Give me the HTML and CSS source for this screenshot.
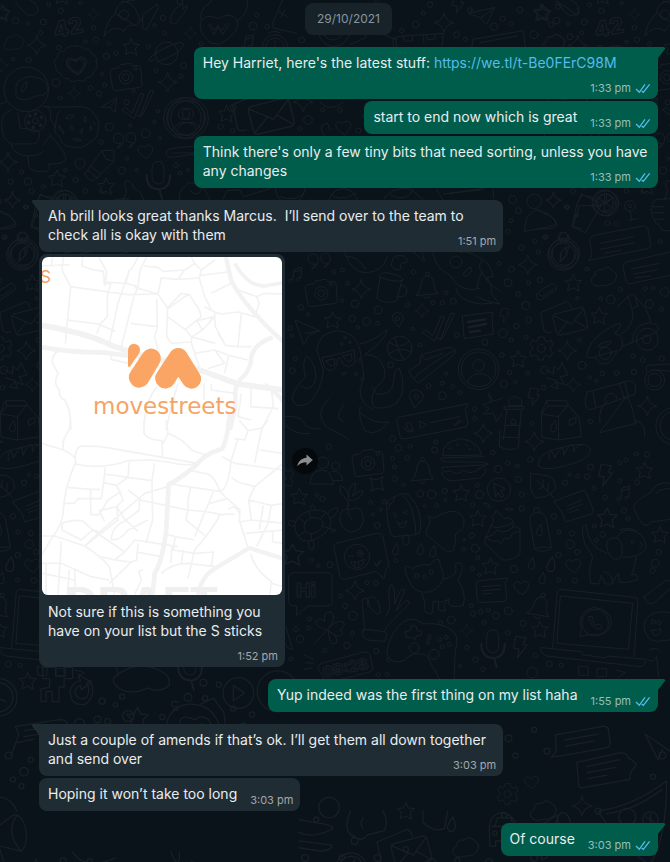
FILE: index.html
```html
<!DOCTYPE html>
<html lang="en">
<head>
  <meta charset="UTF-8" />
  <meta name="viewport" content="width=device-width, initial-scale=1.0" />
  <title>Chat</title>
  <link rel="stylesheet" href="styles.css">
</head>
<body>
  <svg class="wallpaper" aria-hidden="true">
    <defs>
      <path id="star" d="M0-25L7-9 25-7 12 5 16 24 0 15-17 22-13 4-25-8-8-9Z" />
      <path id="spark" d="M0-29Q4-5 29 0Q5 5 0 29Q-5 5-29 0Q-4-5 0-29Z" />
      <path id="heart" d="M4 22Q-24 6-23-8Q-18-24-1-11Q10-26 22-12Q26 2 4 22Z" />
      <path id="bolt" d="M-12-26L14-22 6-6 16-4-8 28-4 6-18 4Z" />
      <path id="drop" d="M4-18Q14 4 6 14Q-4 20-9 9Q-10 0 4-18Z" />
      <path id="cloud" d="M-30 24Q-48 8-28-4Q-26-26-6-22Q8-38 24-22Q44-10 34 8Q24 26-4 24Q-16 30-30 24Z" />
      <g id="camera">
        <path d="M-38-26L-22-29-17-38 14-42 20-34 36-36Q42-36 44-28L48 22Q48 28 42 30L-32 40Q-38 40-40 34L-48-14Q-49-24-38-26Z" />
        <circle r="20" /><circle r="10" /><circle cx="29" cy="-27" r="5" />
      </g>
      <g id="ticks">
        <path d="M-54 14L-44 6-24 24 2-36 12-32-18 40-54 14Z" />
        <path d="M-8 30L0 34 30-44 42-44 10 24Q2 40-8 30Z" />
      </g>
      <g id="user">
        <circle r="61" /><circle r="52" /><circle cy="-12" r="17" />
        <path d="M-34 38Q-22 12 4 13Q30 14 38 34" />
      </g>
      <g id="bell">
        <path d="M-32 28Q-18 16-16-10Q-12-32 4-30Q22-26 22-4Q24 14 34 22Z" />
        <circle cx="2" cy="-36" r="6" /><path d="M-8 32Q2 42 10 30" />
      </g>
      <g id="chat">
        <path d="M-44-26L46-38 44-22 48 28-38 42Z" />
        <path d="M-28-8L24-16M-26 8L26-2M-22 22L8 18" stroke-width="7" />
      </g>
      <g id="mic">
        <path d="M-18-22Q-18-46 0-46Q18-46 18-22V2Q18 22 2 22Q-16 22-18 2Z" />
        <path d="M-34-4Q-34 38 4 38Q36 36 36-4M4 38L12 66" stroke-width="6" />
      </g>
      <g id="envelope">
        <path d="M-42-22L34-42Q42-42 44-34L56 14Q56 22 48 24L-28 42Q-36 42-38 34L-50-12Q-50-20-42-22ZM-48-16L8 8 42-38M-34 38L-6 2M52 18L16-2" />
        <path d="M-54 32L-66 34Q-74 34-76 26L-86-26 -10-58Q0-60 6-40" />
      </g>
      <g id="planet">
        <circle r="34" /><path d="M-28 14Q-60 34-50 14Q-36-4 18-26Q60-42 48-20Q34 4-28 26" />
      </g>
      <g id="quote">
        <path d="M-12 8Q-34 12-34-8Q-32-24-16-22Q0-18-4 2Q-6 16-22 24ZM24 6Q4 8 4-12Q8-26 22-24Q36-18 32 0Q28 14 14 20Z" />
      </g>
      <path id="note" d="M-8 16Q-20 10-20 20Q-14 28-8 16L-4-16 20-22 16 10Q6 6 4 14Q10 24 16 10M-4-8L18-14" />
      <g id="gear">
        <path d="M-8-34H8L10-24 20-19 29-25 35-10 27-4V5L34 12 26 27 15 21 8 25 6 35H-8L-10 25-20 20-29 25-35 10-26 4V-5L-34-11-27-26-17-20-10-25Z" />
        <circle r="12" />
      </g>
    </defs>

    <g id="space" transform="scale(.3333)" data-dots="47,62,10 83,71,5 130,66,9 146,14,6 182,32,8 242,9,5 123,98,6 177,143,7 281,83,7 288,119,8 256,125,5 326,131,6 319,169,9 348,159,7 86,180,8 39,177,5 168,248,12 271,264,7 297,281,8 181,294,6 314,255,6 306,222,5 467,212,6 551,197,9 543,229,6 401,272,5 446,140,6 489,54,8 463,76,5 494,99,6 328,381,12 380,307,8 391,376,5 437,400,13 474,333,5 463,366,5 303,426,7 240,490,15 366,512,11 381,476,5 411,511,5 32,545,8 84,545,11 65,517,6 130,560,6 227,540,8 256,573,7 196,510,5 79,621,6 528,496,7 540,519,6 564,510,5 15,711,6 108,646,5 479,414,5 540,4,9">
      <path d="M74-6Q116 6 114 34Q96 60 70 34L46 6M10 20L26 34 16 56 0 50" />
      <text x="0" y="0" transform="translate(166 114) rotate(-12)" font-size="66">42</text>
      <path d="M312 108Q318 66 346 40Q350 10 376 4Q412 16 420 64L410 76Q378 70 372 94Q340 70 312 108ZM346 40L404 76M364 6Q430 0 462-20M420 64L432 50M428 84V44L472 12 476 22 440 88Z" />
      <circle cx="372" cy="44" r="14" />
      <path d="M512 68Q506 44 540 14Q554 10 548 28L562 16Q562 32 540 54Q526 82 512 68Z" />
      <use href="#spark" transform="translate(281 44) scale(.6)" /><use href="#spark" x="110" y="136" /><use href="#spark" transform="translate(571 100) scale(.65)" />
      <use href="#spark" transform="translate(223 280) scale(.65)" /><use href="#spark" x="503" y="247" /><use href="#spark" x="24" y="486" /><use href="#spark" transform="translate(38 602) scale(.8)" /><use href="#spark" transform="translate(4 196) scale(.7)" />
      <use href="#star" x="394" y="141" /><use href="#star" x="171" y="536" /><use href="#star" x="318" y="559" /><use href="#star" x="6" y="40" transform="rotate(0)" /><use href="#star" x="186" y="-12" />
      <use href="#cloud" transform="translate(42 128) scale(.8)" />
      <path d="M228 138Q244 134 252 148Q272 144 276 162Q294 168 288 186Q298 204 282 212Q280 232 262 232Q250 250 234 240Q216 252 204 236Q186 238 182 220Q164 214 168 198Q156 182 172 172Q172 154 192 154Q204 134 228 138Z" />
      <use href="#heart" x="229" y="197" /><use href="#heart" transform="translate(229 196) scale(1.3)" />
      <use href="#camera" x="378" y="232" /><use href="#planet" x="500" y="160" /><use href="#ticks" x="420" y="316" /><use href="#user" x="552" y="354" />
      <path d="M304 322L350 292 346 338 330 322ZM330 322L346 300" />
      <circle cx="79" cy="268" r="67" />
      <path d="M48 280Q40 236 88 230Q136 230 144 264Q144 288 110 288Q70 306 52 294Q46 290 48 280ZM64 270Q68 244 82 248Q80 268 68 276ZM0 312L18 306M140 318Q156 330 152 356L168 384M34 330Q0 340 6 380Q6 420 34 432H100Q116 430 118 408Q120 392 106 390L60 384 54 340M34 432Q36 464 84 468L86 496Q90 518 140 514Q154 508 146 492Q200 494 198 470Q184 440 150 406M84 468Q120 468 128 454M152 404L130 434" />
      <circle cx="106" cy="363" r="32" /><circle cx="106" cy="363" r="9" />
      <g stroke-width="5"><circle cx="106" cy="342" r="3" /><circle cx="124" cy="352" r="3" /><circle cx="122" cy="376" r="3" /><circle cx="100" cy="382" r="3" /><circle cx="86" cy="368" r="3" /><circle cx="90" cy="348" r="3" /></g>
      <path d="M130 320Q190 322 230 320Q270 318 282 342Q304 366 294 392Q294 418 268 428Q244 450 212 440Q184 438 178 410Q156 394 168 370Q168 346 180 332" />
      <path d="M198 356Q206 340 222 346Q216 358 198 356ZM256 350Q262 358 256 366Q246 362 256 350ZM212 378Q222 380 218 390Q208 388 212 378ZM246 386Q252 394 244 402Q236 396 246 386ZM272 392Q280 384 272 376ZM176 376Q190 390 192 402Q178 394 176 376ZM220 418Q236 410 244 422Q230 426 220 418ZM280 366L286 374" />
      <use href="#quote" x="374" y="422" /><use href="#heart" x="436" y="454" /><use href="#mic" x="474" y="530" />
      <path d="M254 522L306 452 342 450 342 484 284 540Q268 548 254 522ZM306 452L318 478 342 484M262 510L292 534M272 498L302 522" />
      <path d="M600 436L510 446Q496 452 498 464Q504 474 520 472L600 460M514 459H590" />
      <path d="M370 600L380 574Q366 540 384 542Q396 546 402 566Q424 572 430 600M540 600Q532 572 556 560Q560 544 580 550L600 548M114 600L122 586 156 592" />
      <circle cx="196" cy="610" r="38" /><circle cx="196" cy="610" r="28" /><path d="M196 582V610L174 592M196 610L218 592" />
      <path d="M-10 630Q36 640 48 676Q40 690-10 686M114 620L96 680 120 686" />
      <circle cx="70" cy="760" r="46" /><circle cx="70" cy="760" r="36" /><circle cx="70" cy="712" r="14" /><path d="M84 738L76 768 58 784 62 754Z" />
    </g>
    <use href="#space" x="541" />

    <g transform="translate(190) scale(.3333)" data-dots="200,45,6 189,78,12 232,80,7 33,131,6 335,120,9 635,92,7 677,74,10 700,40,6 800,104,9 826,118,6 912,80,11 938,56,8 962,72,6 990,30,9 1032,104,12 1084,74,8 840,30,7 1104,20,8 1140,110,9 130,322,9 92,380,8 128,392,7 354,360,13 398,330,6 450,330,7 330,386,6 505,392,8 524,350,6 560,10,7 720,14,8">
      <path d="M60 128Q20 92 34 62Q48 40 86 56Q120 32 142 62Q152 96 92 132ZM34 62Q24 30 60 8L70-10M142 62Q180 40 172-10M54 72L72 104 84 82 98 104 118 70M60 72L74 92 84 74 96 92 108 70" />
      <path d="M250 84Q244 70 256 52L280-6M250 84L320 100M264 34L292 50M284 30L272 54" />
      <circle cx="255" cy="142" r="38" /><circle cx="255" cy="142" r="28" /><path d="M255 120V146H238M234 100Q250 90 270 98" />
      <use href="#note" x="171" y="126" /><circle cx="432" cy="94" r="46" /><path d="M400 104Q432 140 460 100ZM480 134L530 112 512 80 560 96 620 120" />
      <path d="M620 140L616 112 640 108 700 104 702 130M700 104L760 100 756 138M640 108L644 124 668 122 666 106M710 104L712 120 736 116 734 102M610 112Q600 150 640 160" />
      <use href="#spark" x="762" y="68" /><use href="#bolt" x="806" y="12" /><use href="#star" x="1054" y="38" /><use href="#cloud" transform="translate(1090 130) scale(.9)" />
      <path d="M836 40L914 22 890 74 872 54ZM914 22L872 54M1100 4Q1130 20 1160 46Q1174 40 1160 26M845 140L850 118 1000 92 1006 140M870 128L982 108" />
      <use href="#user" x="-6" y="354" /><use href="#star" x="110" y="342" /><use href="#envelope" transform="translate(240 348) scale(1.3)" /><use href="#spark" x="340" y="306" /><use href="#heart" x="460" y="382" />
      <path d="M396 376Q388 400 418 420L438 408M396 376L412 368 420 390M390 306Q420 340 460 306" />
      <circle cx="300" cy="566" r="44" /><circle cx="460" cy="610" r="44" /><path d="M100 596L110 572 150 570 160 590 240 566M580 600Q600 560 660 566L700 600M740 570L760 600M780 580L880 566M0 570Q20 600 40 560L60 600" />
    </g>

    <g id="street" transform="translate(280 190) scale(.3333)" data-dots="698,28,12 715,62,9 693,92,6 684,125,7 859,51,6 764,154,6 725,173,8 775,187,6 795,142,6 695,238,9 658,220,6 684,278,12 714,312,7 746,278,6 780,270,8 878,4,8 921,237,6 892,325,5 963,326,5 992,329,13 1022,298,6 1096,296,6 1120,294,5 1154,306,13 1108,342,12 1145,358,6 737,347,12 746,390,9 709,408,8 669,430,13 694,450,6 739,442,6 898,451,6 1059,498,6 1088,510,7 1145,506,8 906,526,12 967,551,7 1010,549,7 1062,546,8 949,573,5 929,562,5 794,540,12 743,549,6 689,548,7 666,495,7 615,457,9 671,582,11 706,576,5 791,593,7 531,435,7 399,417,5 420,465,6 383,345,6 401,246,7 459,338,6 487,338,6 520,334,9 498,309,6 162,246,6 187,240,6 203,280,6 225,341,11 186,332,5 63,352,8 84,373,5 217,386,10 260,394,12 293,400,6 234,412,5 295,360,12 30,415,7 35,438,5 46,506,6 37,542,9 332,525,9 499,551,5 487,580,6 446,588,7 487,617,12 518,590,6 540,608,6 240,511,5 228,552,5 247,566,5 584,657,6 584,685,6 757,701,6 931,694,7 983,100,8 1009,102,7 1141,155,6">
      <use href="#quote" x="118" y="214" /><use href="#note" x="46" y="254" /><use href="#camera" x="124" y="310" /><use href="#bell" x="440" y="288" />
      <use href="#ticks" x="482" y="414" /><use href="#chat" x="592" y="404" /><use href="#user" x="596" y="538" /><use href="#gear" x="784" y="475" /><use href="#envelope" x="868" y="394" /><use href="#cloud" x="972" y="262" />
      <use href="#star" x="158" y="391" /><use href="#star" x="880" y="279" /><use href="#star" x="958" y="378" /><use href="#star" x="715" y="508" />
      <use href="#spark" x="244" y="298" /><use href="#spark" x="743" y="224" /><use href="#spark" x="862" y="482" /><use href="#spark" x="1102" y="648" /><use href="#spark" transform="translate(426 362) scale(.75)" /><use href="#spark" transform="translate(820 30) scale(.85)" /><use href="#spark" transform="translate(880 584) scale(.75)" />
      <use href="#bolt" transform="translate(676 375) scale(.8)" /><use href="#bolt" x="764" y="620" />
      <circle cx="763" cy="34" r="22" /><path d="M734 124Q732 80 762 62Q772 56 790 70Q824 78 830 102Q810 112 734 124Z" />
      <path d="M904 12L890 46 876 110 916 128 966 42 904 12M892 48L962 46" /><circle cx="974" cy="38" r="38" /><circle cx="974" cy="38" r="26" /><path d="M974 12V64M950 24L998 54M950 54L998 24" />
      <circle cx="1050" cy="48" r="16" /><circle cx="1050" cy="48" r="5" /><path d="M1050 64L1056 88M1046 92L1070 86" />
      <path d="M1170 26L1130 28Q1114 36 1118 52Q1108 60 1118 68Q1110 80 1124 88Q1120 98 1136 104L1148 122H1170M1118 50H1150M1118 68H1152M1122 88H1152" />
      <circle cx="849" cy="195" r="46" /><circle cx="849" cy="195" r="36" /><circle cx="849" cy="140" r="14" /><path d="M858 172L858 194 840 216 842 190Z" />
      <path d="M942 136L1090 108Q1102 108 1104 116L1112 164Q1112 174 1102 176L952 206 926 212 936 196 930 152Q930 140 942 136ZM962 160L1060 140M962 178L1062 158M974 190L1024 180M1170 186L1040 216Q1028 220 1030 232L1038 274Q1044 284 1056 280L1170 256M1056 236L1140 220M1062 252L1130 240M1064 264L1110 258" />
      <path d="M300 262L290 324Q318 346 350 332L366 270M300 262Q296 248 320 248Q364 256 370 270Q350 280 300 262ZM362 286Q384 286 380 306Q376 326 352 318" />
      <path d="M194 186Q214 250 260 248Q310 244 322 200M198 200Q230 194 258 238M340 204Q366 186 380 208Q386 220 370 218Q356 220 364 236Q344 246 334 226ZM400 186L434 216 426 186M458 186Q470 240 510 256Q540 310 600 296Q580 300 606 246Q590 230 608 210Q560 176 540 188M606 246Q620 280 658 302M610 210Q630 220 640 260L620 262Q640 290 634 310L658 342Q620 336 590 320M528 296Q530 330 600 342L636 340" />
      <circle cx="528" cy="216" r="18" /><rect x="548" y="240" width="30" height="12" rx="5" transform="rotate(-45 563 246)" />
      <path d="M46 390L118 422 88 434 72 464ZM118 422L74 430" /><path d="M356 410L336 386Q338 366 354 368Q372 372 370 388Z" /><circle cx="352" cy="386" r="6" />
      <circle cx="359" cy="475" r="37" /><path d="M328 458Q360 480 388 454M326 492Q360 466 394 486M344 442Q352 480 370 508" />
      <path d="M110 480Q114 430 170 422Q226 424 240 480L252 560 240 600Q240 640 280 660M110 480L130 540Q126 600 86 640Q44 660 36 624Q46 590 76 560Q64 510 82 498Q106 520 108 560Q100 610 62 590M240 462Q290 450 320 418Q326 430 286 470L254 494Q300 490 314 540Q320 570 290 590Q268 620 280 650Q310 662 350 640Q384 600 358 534Q340 540 342 570Q336 620 290 612L276 590M146 626Q100 670 140 712Q200 740 206 750M190 644Q160 690 190 694M240 650Q234 690 256 724Q290 740 326 696Q280 704 240 668M16 680Q60 676 70 696Q80 720 120 716M10 700Q50 740 90 730" />
      <path d="M126 504L222 480 226 516Q210 540 188 522L180 502 172 508Q174 540 150 542Q130 536 126 504ZM138 512L164 506 164 526Q148 534 138 512ZM188 498L214 492 216 510Q202 524 188 498Z" />
      <circle cx="195" cy="442" r="4" /><circle cx="185" cy="461" r="4" /><circle cx="210" cy="457" r="4" /><path d="M186 554Q190 544 200 546Q196 560 186 554Z" />
      <path d="M386 544Q392 560 414 580Q480 530 526 490Q528 474 506 472L424 494 420 520ZM400 566Q450 520 526 480M424 494L436 510 490 490" />
      <path d="M770 310Q764 330 784 330L828 300Q834 284 816 280L778 304Q774 320 790 318L818 298" />
      <path d="M1012 350L1050 314 1064 314 1074 348 1056 356 1044 320M1064 320Q1104 350 1112 398M1056 356Q1070 400 1024 434M920 500Q924 440 1020 398Q1026 410 1004 430Q1040 440 1022 480L960 496Q932 510 920 500ZM1026 470L1056 458M1056 458Q1060 400 1110 398Q1150 406 1126 430Q1090 440 1056 458M944 502Q980 550 1010 486" />
      <circle cx="1102" cy="448" r="33" /><circle cx="1100" cy="448" r="13" /><circle cx="976" cy="490" r="18" /><ellipse cx="974" cy="463" rx="20" ry="6" transform="rotate(-20 974 463)" />
      <path d="M798 540L820 552 822 528 836 540 846 518 864 556 840 560 854 584 828 576 836 596 812 590 830 572 800 564" />
      <path d="M404 654L388 620Q390 598 410 600Q432 606 430 622Z" /><circle cx="409" cy="620" r="7" />
      <path d="M356 682L540 646 564 640 556 660 564 700Q564 710 552 712L376 746 362 746 350 694Q350 684 356 682ZM420 694L440 704 422 716ZM450 698L540 680M520 700L526 708 538 690M530 702L548 690" /><path d="M378 700Q388 690 394 704L398 718Q386 726 382 714ZM372 712Q380 736 404 720" />
      <path d="M688 646L686 630Q704 610 724 630L726 646ZM674 650H732V658H674ZM680 660L670 750M724 660L716 750M676 706H720M626 612L640 634 668 624M626 612L634 636 608 644 628 656 610 672 640 670 650 694 666 672M692 700Q692 686 700 688Q710 690 706 702Z" />
      <path d="M800 632H858L864 644 898 684 904 740 836 750 786 742 784 672ZM800 632L804 648 784 672 836 680 836 750M804 648H862M836 680L864 644M868 690L888 682V698L870 706Z" /><use href="#drop" x="820" y="710" />
      <path d="M922 606L1050 572Q1072 576 1066 612L930 660Q906 650 922 606ZM938 604L948 652M1018 582L1034 628M1034 578L1046 622M960 700Q954 650 984 632M1040 620Q1056 640 1064 690L1068 700 960 728ZM1064 690Q1100 700 1094 740M974 632Q978 608 996 610Q1016 616 1008 630" />
      <path d="M1170 522L1104 526Q1096 530 1100 544M1170 544L1130 540" /><circle cx="1124" cy="570" r="30" /><circle cx="1124" cy="570" r="20" /><circle cx="1184" cy="708" r="56" /><circle cx="1184" cy="708" r="44" />
      <path d="M0 20Q50 40 80 0M150 10Q170 40 230 10M330 14Q380 40 400 0M490 12L600 0M640 0V24M1080 0L1100 12" />
    </g>
    <use href="#street" x="-541" />

    <g id="food" transform="translate(280 430) scale(.3333)" data-dots="338,26,9 355,54,10 390,49,6 147,50,8 467,36,6 464,60,9 338,85,6 382,84,7 343,111,6 344,146,8 370,164,5 638,68,7 654,117,11 683,100,7 712,108,6 715,148,9 751,88,8 725,194,8 592,166,6 599,194,12 578,224,6 421,191,10 455,193,13 494,183,8 470,226,6 434,228,4 496,210,4 272,217,6 313,215,7 302,239,4 278,253,4 292,286,9 110,195,5 127,207,8 855,158,8 869,134,5 893,139,6 921,140,8 932,111,9 942,175,6 975,203,7 1019,152,6 1071,157,8 1069,72,6 1101,73,8 1038,91,6 1019,98,6 1032,242,8 1045,265,6 822,259,8 725,236,8 943,288,6 968,313,8 950,331,6 876,310,8 837,306,6 871,343,13 892,366,8 836,375,8 553,329,4 576,317,8 551,357,6 586,355,12 594,384,6 577,416,6 598,435,5 702,417,11 836,451,6 885,452,8 1136,366,8 1126,400,12 1118,422,8 94,391,6 115,407,5 150,404,9 347,392,6 261,458,6 288,459,7 182,498,6 195,528,8 219,557,13 217,610,6 89,567,6 48,598,7 86,595,6 60,627,11 201,646,10 134,661,6 289,663,8 326,690,6 33,687,6 482,578,6 514,570,12 574,527,6 579,551,8 602,545,7 625,540,6 648,557,10 685,543,12 613,577,6 683,608,7 730,580,9 561,653,7 540,707,5 586,689,8 609,718,7 766,677,7 808,702,9 844,706,6 295,734,6 322,733,6">
      <use href="#camera" x="264" y="100" /><use href="#bell" x="426" y="124" /><use href="#bell" transform="translate(778 530) rotate(15)" /><use href="#note" x="1030" y="190" />
      <use href="#star" x="58" y="201" /><use href="#star" x="544" y="190" /><use href="#star" x="594" y="266" /><use href="#star" x="632" y="409" /><use href="#star" x="1094" y="122" /><use href="#star" transform="translate(982 264) scale(1.2)" /><use href="#star" x="780" y="599" /><use href="#star" x="1140" y="315" /><use href="#star" transform="translate(38 374) scale(1.3)" />
      <use href="#spark" x="610" y="10" /><use href="#spark" x="763" y="35" /><use href="#spark" transform="translate(291 162) rotate(40)" /><use href="#spark" x="225" y="482" /><use href="#spark" transform="translate(560 602) scale(.65)" />
      <use href="#bolt" transform="translate(978 134) scale(1.2)" /><use href="#bolt" transform="translate(722 650) scale(1.2)" /><use href="#heart" x="880" y="406" /><use href="#heart" x="724" y="472" /><use href="#mic" x="638" y="646" />
      <use href="#drop" x="346" y="359" /><use href="#drop" x="420" y="358" /><use href="#drop" x="458" y="366" /><use href="#drop" x="754" y="402" /><use href="#drop" transform="translate(812 404) scale(1.3)" /><use href="#drop" x="786" y="446" /><use href="#drop" x="778" y="302" />
      <use href="#gear" x="6" y="144" /><circle cx="657" cy="179" r="35" /><path d="M642 160L676 176 662 182 672 198 662 202 654 188 648 200Z" />
      <circle cx="129" cy="98" r="17" /><circle cx="167" cy="108" r="12" /><path d="M90 160Q92 122 126 120Q156 124 160 162ZM156 124Q182 120 188 152H160" />
      <path d="M488 76Q486 34 544 26Q598 34 604 74ZM484 84Q480 96 500 96H600Q630 100 624 104L484 112M484 84L612 80M484 112Q490 134 510 122Q530 140 550 120Q570 136 590 120L618 106M486 128Q488 152 520 152L600 144Q620 130 616 116" />
      <path d="M506 56L514 54M530 48L534 40M556 44L562 46M566 58L572 56M580 46L584 50" />
      <path d="M776 110Q768 70 840 54Q926 30 932 60Q930 90 860 106Q800 124 776 110ZM808 92Q804 62 818 66L824 84Q840 50 850 56L852 76Q866 38 880 46L880 66Q892 40 904 46" />
      <path d="M752 130L806 138Q830 150 826 178Q800 206 768 202Q746 190 752 130ZM770 150L820 202M790 150L788 172 774 178M806 160L802 184M660 0L658 50Q690 66 716 52L718 0M664 22H716" />
      <path d="M822 214L906 182Q918 180 920 190L940 240Q942 250 934 252L858 276 848 250ZM862 228L906 210M862 240L908 222M868 248L896 238" />
      <path d="M208 230Q202 204 182 190Q176 164 184 168Q208 180 206 210Q202 170 226 158Q230 180 216 200Q236 180 250 184Q244 210 208 212M208 250L200 226M180 268Q176 230 214 238Q248 220 250 270Q246 304 214 306Q182 300 180 268ZM200 250Q214 258 216 272" />
      <path d="M44 284Q52 250 100 240Q146 236 154 274Q150 310 100 330Q48 344 44 284ZM72 290Q76 264 104 262Q128 264 130 282Q122 306 94 312Q74 310 72 290ZM92 238Q90 224 102 226L106 240M144 250Q160 228 174 236Q170 258 152 264M44 290Q16 286 28 272L46 274M86 334Q84 364 98 360Q106 348 100 332M150 296L168 300 152 308M74 278L52 262M92 262L86 244M124 264L138 246M130 290L150 296M94 312V332M76 304L54 318" />
      <path d="M320 240Q316 208 344 200Q376 180 390 200Q424 230 422 300Q420 312 408 314L340 320Q326 314 320 240ZM366 194Q404 220 408 314M320 240Q334 234 328 222Q340 222 344 200M368 320Q366 346 378 346Q392 344 386 318M340 250L350 256 342 262M382 240L370 248 382 252M350 276Q366 286 380 272L374 290Q360 300 356 280" />
      <path d="M446 260Q460 270 480 254Q540 228 552 270Q556 300 526 312Q530 370 502 366Q480 350 460 330Q430 316 442 294Q456 276 446 260Z" />
      <path d="M634 284L626 306Q602 340 626 350L660 384Q684 402 720 372L720 296Q712 290 700 290M634 284Q648 268 634 262Q648 254 648 240L664 256Q668 270 684 264Q702 264 700 290Q680 314 650 300Q640 320 620 320M618 322Q640 340 650 332L664 340 674 324 690 326 698 310 720 304M632 286Q650 302 696 280M612 220Q622 216 632 232Q622 236 612 220ZM676 238Q690 230 700 238Q690 246 676 238Z" />
      <path d="M750 276Q746 250 770 248Q796 246 800 270L814 350Q816 360 790 364Q766 364 764 356ZM762 246V234L776 232 780 246M764 356Q790 348 814 352" />
      <path d="M168 340L290 310Q304 308 308 318L326 404Q326 414 318 418L312 446 288 424 196 448Q184 450 180 440L162 352Q162 342 168 340ZM284 396L290 410 298 392M294 406L306 390" /><circle cx="231" cy="381" r="38" /><circle cx="240" cy="370" r="9" /><circle cx="240" cy="370" r="3" /><path d="M206 380Q214 372 222 380M212 396Q234 400 252 388Q252 410 232 414Q216 412 212 396ZM224 396V410M236 394V412" />
      <path d="M386 450Q376 430 374 410Q380 404 398 416Q424 398 450 406Q468 380 478 390Q480 410 490 430Q492 470 450 486Q400 494 386 450ZM424 490Q440 520 432 540Q440 554 456 550L460 514Q484 520 506 508M476 516L474 540 496 544Q486 520 506 508M506 508Q500 530 530 530L550 526Q560 490 534 450Q560 400 536 398Q520 400 528 416Q530 440 490 448M428 440Q434 452 440 440L434 434Z" /><circle cx="410" cy="438" r="7" /><circle cx="454" cy="426" r="7" />
      <path d="M588 462Q588 452 598 452L684 444 676 458 680 506Q680 514 670 514L602 518Q592 518 592 508ZM606 470L662 466M608 482L660 478M608 492L634 490" />
      <path d="M914 284Q900 290 914 340L938 380Q924 420 932 460L956 462 964 436 976 462H998Q1000 430 970 424M998 456L1014 430 1020 458 1046 456 1070 450Q1080 430 1054 434Q1064 420 1068 380M918 284Q922 350 980 370M980 350Q978 320 1010 324Q1030 330 1026 370Q1024 388 1004 388Q984 378 980 350ZM1010 324Q1030 290 1066 304Q1100 320 1098 356Q1080 384 1028 382M1020 300Q1050 290 1068 302M1080 336L1088 346 1078 358" /><circle cx="1058" cy="336" r="4" />
      <path d="M1170 160Q1130 150 1110 190Q1080 200 1060 230L1078 270Q1100 300 1112 276L1170 268M1130 190Q1136 176 1170 176" />
      <path d="M832 484Q834 478 842 478L1064 502Q1074 504 1074 512L1062 680M832 484L818 654M842 498L1058 520 1046 658 832 640ZM782 654Q780 672 800 678L1080 710Q1098 708 1098 688L980 678 976 684 908 674 906 666ZM930 580" /><path d="M900 618L904 596Q890 546 940 532Q992 536 994 580Q986 622 926 614ZM926 560Q930 594 962 598L966 588 954 582 946 586 936 572 938 562Z" /><circle cx="946" cy="578" r="40" />
      <path d="M1092 500L1160 450 1200 460M1092 500Q1100 526 1120 520L1170 476M1170 548Q1100 536 1092 588Q1096 630 1130 634L1170 630M1116 600Q1130 604 1142 596Q1140 622 1122 616ZM1108 660Q1130 650 1138 662M1104 690Q1120 700 1130 680L1136 740" /><circle cx="1120" cy="576" r="6" /><circle cx="1138" cy="578" r="6" />
      <path d="M40 428H142Q156 430 156 442V514Q156 528 142 528H84L50 556V528H40Q26 526 26 514V442Q28 430 40 428Z" /><text x="48" y="500" font-size="58">Hi</text>
      <path d="M140 600Q104 590 108 574Q120 560 134 574Q130 548 146 546Q168 548 158 576L142 600Q170 566 190 576Q198 590 180 600Q194 610 182 618Q164 620 144 602Q176 620 170 638Q160 646 150 634Q146 616 144 602M140 602L104 640" />
      <path d="M248 608L254 598 246 510Q256 500 266 510Q262 530 290 552Q304 552 300 540Q296 504 276 500Q256 500 264 530M250 598L310 604Q322 606 320 616L314 634 262 630Q246 624 248 608ZM314 604L320 590 388 520Q386 508 378 512L348 542Q374 490 372 478Q362 470 344 524Q346 470 334 464Q322 470 330 530L320 556" />
      <path d="M320 668Q330 600 376 572Q400 560 430 582Q480 576 516 600Q540 620 526 660L522 750M320 668Q330 706 372 692Q400 660 440 676L480 750M376 604L392 602 392 588 408 588 412 602 426 604 424 616 410 618 406 628 392 622 382 624ZM440 640L446 614 454 616 446 642Z" /><circle cx="403" cy="654" r="15" /><circle cx="462" cy="673" r="15" /><circle cx="479" cy="629" r="6" /><circle cx="499" cy="622" r="6" /><circle cx="487" cy="650" r="6" /><circle cx="508" cy="643" r="6" />
      <path d="M126 700L252 666Q266 664 270 674L278 714Q278 724 268 726L140 760 116 720Q112 704 126 700ZM72 674L100 688M76 698L100 700M72 718L96 714M18 590L38 660 22 652 0 620" /><text transform="translate(132 744) rotate(-12)" font-size="46">09:28</text>
      <path d="M896 710H924V736H898ZM952 716H980V740H952ZM1008 720L1036 728 1014 744" /><circle cx="757" cy="728" r="16" />
    </g>
    <use href="#food" x="-541" />

    <g transform="translate(0 670) scale(.4273)" data-dots="239,73,7 300,108,13 286,62,6 270,82,5 160,150,6 186,126,12 228,116,8 252,120,7 440,64,9 476,30,8 480,66,6 546,90,6 570,130,6 590,104,6 512,34,6 380,110,6 412,90,5 20,200,8 56,238,10 50,272,6 72,210,6 30,256,6 840,136,6 1206,200,6 1190,160,8 1250,140,6 1280,190,7 714,440,8 764,464,6 884,440,8 770,500,10 640,456,6 880,490,6 960,470,6 1010,450,9 1050,520,7 990,510,6 34,464,9 148,446,7 210,448,6 294,466,6 318,496,9 350,500,8 180,494,7 130,506,6 374,500,6 450,458,9 484,470,6 480,500,6 524,466,6 600,480,8 620,520,10 700,470,6 590,540,6 720,560,8 250,540,8 330,560,8 1070,446,6 1144,450,8 1158,510,8 830,400,8 800,438,6 740,350,6 950,420,6 1180,340,6 1250,440,8 1340,420,7 1400,330,7 1528,250,6 1550,200,8">
      <circle cx="-4" cy="64" r="44" /><circle cx="-4" cy="64" r="34" /><path d="M-4 40V66L14 74" />
      <use href="#star" transform="translate(65 26) scale(.8)" /><use href="#star" x="322" y="112" /><use href="#star" transform="translate(84 462) scale(.8)" /><use href="#star" transform="translate(408 478) scale(.8)" /><use href="#star" transform="translate(950 330) scale(.8)" /><use href="#star" transform="translate(932 556) scale(.8)" /><use href="#star" transform="translate(200 558) scale(.8)" />
      <path d="M100-6H130V14H150V-6H170V20H150V40H138V74H122V50H108V74H96V44L116 40V20H100Z" />
      <path d="M212 24Q226 60 200 80Q164 86 164 48Q170 28 188 26L184 10 214 30 190 46 188 36Q174 42 176 54Q184 74 202 64Q214 48 202 32Z" />
      <path d="M280 44Q246 20 290 2Q330-20 370 0Q400 10 396 36Q370 56 346 42Q310 60 280 44Z" /><use href="#mic" transform="translate(444 -6) scale(.8)" /><circle cx="558" cy="54" r="36" /><path d="M546 36L572 54 546 72Z" /><circle cx="650" cy="50" r="48" />
      <path d="M390 160Q380 90 440 80Q510 76 520 160M420 130Q420 104 446 112Q456 120 466 110Q492 106 494 134Q480 166 440 160Q420 150 420 130ZM404 86Q396 66 416 76M470 80L500 66 524 100 530 150" /><circle cx="440" cy="134" r="6" /><circle cx="474" cy="132" r="6" />
      <path d="M36 132L140 116Q156 116 158 126L156 162M36 132L44 150 26 200M58 142L124 132M56 156L110 148M40 170L80 162M252 150L336 160 330 144" /><use href="#note" transform="translate(360 148) scale(.8)" />
      <path d="M690 126L700 160M730 126L750 160M800 126Q830 170 880 126M960 126L1000 160M610 126L640 160M900 146L960 130M1060 126L1100 150" />
      <path d="M1300 152L1410 132Q1422 130 1424 140L1428 170Q1428 180 1418 182L1320 200 1290 204 1302 190ZM1320 164L1400 150M1324 178L1390 166M1350 216L1450 194Q1466 192 1470 204L1490 220 1476 240 1474 256 1362 276Q1354 276 1354 268ZM1372 226L1450 210M1374 240L1440 228M1376 254L1420 246M1510 150L1568 190M1510 150L1540 210 1550 186" />
      <use href="#heart" transform="translate(1244 262) scale(.7)" /><use href="#cloud" transform="translate(1272 330) scale(.8)" /><use href="#spark" transform="translate(1362 318) scale(.8)" /><use href="#gear" transform="translate(1188 290) scale(.7)" /><use href="#spark" transform="translate(744 512) scale(.7)" /><use href="#spark" transform="translate(382 562) scale(.6)" />
      <path d="M1400 330Q1480 320 1560 260M1400 330Q1440 400 1520 456Q1560 400 1560 260M1420 336Q1490 326 1548 280M1484 410Q1484 384 1504 390Q1524 376 1526 400Q1514 420 1484 410Z" /><circle cx="1468" cy="344" r="20" /><circle cx="1522" cy="350" r="18" /><path d="M1522 338V362M1512 344L1532 356" />
      <path d="M1146 390Q1140 336 1176 334Q1210 338 1212 390V412H1196V400H1160V412H1146ZM1152 366H1206M1158 366L1164 346H1196L1202 366" /><circle cx="1158" cy="382" r="5" /><circle cx="1200" cy="382" r="5" />
      <path d="M1236 380Q1220 400 1240 414L1320 430 1304 340ZM1262 416L1268 444 1280 440 1278 420" /><ellipse cx="1318" cy="382" rx="20" ry="48" /><use href="#cloud" transform="translate(1090 416) scale(.8)" />
      <use href="#envelope" transform="translate(960 426) scale(.9)" /><circle cx="822" cy="464" r="36" /><circle cx="822" cy="464" r="28" /><path d="M830 444L826 468 814 484 818 460Z" /><use href="#gear" transform="translate(1112 480) scale(.6)" />
      <path d="M700 380Q730 396 778 372Q782 362 740 358L700 350M700 400L776 410Q780 420 750 424L700 416M820 330Q800 380 830 390Q846 404 860 386L900 376Q910 350 896 330M850 346Q840 360 850 370M990 330V356Q1010 380 1040 372L1048 330" /><circle cx="770" cy="322" r="24" /><use href="#drop" transform="translate(1056 362)" />
      <use href="#planet" transform="translate(568 514) scale(.9)" /><use href="#planet" transform="translate(92 556) scale(.8)" /><use href="#planet" transform="translate(1070 540) scale(.9)" /><use href="#bolt" x="254" y="506" /><use href="#cloud" transform="translate(10 520) scale(.8)" /><use href="#cloud" transform="translate(860 560) scale(.8)" />
      <path d="M430 540Q446 520 470 550L486 576M640 576Q630 530 680 524Q740 530 740 576M660 560Q670 544 684 552M700 556L716 566M170 426Q200 470 270 440M400 426Q420 476 420 426" />
      <path d="M-10 370L30 340Q50 334 60 370Q66 410 50 424L-10 410M40 340Q10 380 50 424M0 420L8 446M-10 300Q20 290 40 330" />
    </g>
  </svg>

  <svg class="sprites" aria-hidden="true">
    <symbol id="read" viewBox="0 0 16 11">
      <path d="M1 6L4.300 9.300 10 1.300M6.600 8L8.300 9.300 14.600 1.300" fill="none" stroke="#53bdeb" stroke-width="1.300" />
    </symbol>
  </svg>

  <main class="chat">
    <time class="date">29/10/2021</time>

    <div class="row out first">
      <p class="bubble">Hey Harriet, here's the latest stuff: <a href="https://we.tl/t-Be0FErC98M">https://we.tl/t-Be0FErC98M</a>
        <span class="meta">1:33 pm <svg class="tick"><use href="#read" /></svg></span></p>
    </div>
    <div class="row out">
      <p class="bubble">start to end now which is great
        <span class="meta">1:33 pm <svg class="tick"><use href="#read" /></svg></span></p>
    </div>
    <div class="row out">
      <p class="bubble">Think there's only a few tiny bits that need sorting, unless you have any changes
        <span class="meta">1:33 pm <svg class="tick"><use href="#read" /></svg></span></p>
    </div>

    <div class="row in first">
      <p class="bubble">Ah brill looks great thanks Marcus.&nbsp; I’ll send over to the team to check all is okay with them
        <span class="meta">1:51 pm</span></p>
    </div>
    <div class="row in">
      <div class="bubble media">
        <svg class="picture" viewBox="0 0 240 338" role="img" aria-label="movestreets map">
          <rect width="240" height="338" fill="#fff" />
          <g fill="none" stroke="#f2f2f2" stroke-width="5" stroke-linejoin="round">
            <!-- upper half of the map -->
            <g transform="translate(-4 -7) scale(.3333)">
              <path d="M12 226Q150 250 220 286Q340 330 440 344Q520 372 600 402L736 420" stroke-width="17" />
              <path d="M12 292Q90 306 200 308L330 324" stroke-width="14" />
              <path d="M564 21L580 92Q620 170 736 276M704 262Q650 280 640 320Q640 360 606 390L592 420V470L576 540M680 404Q720 430 736 456" stroke-width="13" />
              <path d="M590 40Q630 110 680 108L736 98" stroke-width="11" />
              <path d="M12 48L96 44M44 21L40 46M76 21L72 60L98 110L82 280M98 110L270 134L360 132M134 21L132 48 160 58 196 64 200 110M182 21L206 64 202 100 218 102 208 140V200L188 220 176 252M88 210L180 222L232 244M202 96L264 100 274 60 282 56 300 21M274 60L240 160 214 280M264 100L300 110 306 60 326 21M300 110L288 140 250 290M290 112L360 132 370 84 420 88 440 60 376 64 360 52 318 48M440 60L470 40 460 21M420 88L484 84 490 60 530 30M484 84L500 140 520 180M490 60L470 40M360 132L390 176 440 140 454 134 430 130 388 174V200L442 238 490 200 484 180 454 134M356 146L358 230 278 220M358 230L350 260 360 300 340 320M388 200L386 260 400 280 460 276 462 260 494 240 476 212 530 200 530 186M442 238L460 260 532 280M494 240L530 200 532 230 560 280M530 186L500 170M530 186L550 192 600 186 650 200 664 160 656 140 680 130 736 132M656 140L600 120 580 100 520 130M610 190L600 290 562 286 540 250M600 290L640 290M460 276L470 310 530 300 560 340 510 356M470 310L484 350M530 300L572 316 630 330M572 316L560 370M486 76L570 66M66 302Q40 310 44 340L60 370Q44 400 64 420Q60 440 80 450Q100 480 98 540M358 410Q320 450 318 540M420 400L400 470 384 540M220 310V328L270 340M498 400V450M520 402V420L592 430M640 410L638 470 720 476M700 410L706 470 670 540M610 430L600 500 640 510" />
            </g>
            <!-- lower half -->
            <g transform="translate(-4 163) scale(.3333)">
              <path d="M576-20Q566 70 552 86Q500 100 470 140Q420 180 392 194L384 340Q370 430 350 460L344 524" stroke-width="14" />
              <path d="M480 524Q490 470 530 446L634 384 736 416" stroke-width="13" />
              <path d="M12 70L76 90Q120 110 112 130Q80 200 76 270Q76 310 44 350L12 404M98 0L94 30Q70 60 76 90M112 124Q110 80 132 78L190 80 340 106 480 130Q440 140 390 126L340 120 270 122Q190 150 112 132M318 0V40Q330 60 372 62L374 116M384 0L390 40 376 70M390 40Q440 60 460 90L500 104M200 142V164L190 236H120L110 250H80M90 202L158 208H186M158 208V284H184L210 240 250 214M198 162L270 172 274 122M198 188L236 196 270 172 342 182 350 130M236 196L256 240 236 260 184 272 200 304M342 182L344 300 324 368M310 240L270 210M12 348H50L140 378 240 300 236 260 262 300 300 334M140 378L180 340 320 220 390 200M220 360Q220 320 262 302L304 270V240L384 256 450 270V240L458 204M220 360Q250 360 270 330L330 300M72 310Q110 296 136 304L164 330 130 360 72 330ZM164 330L260 396 290 360 420 380M170 330L190 340M140 378Q190 410 214 440L230 524M70 364L60 524M12 430L70 430 160 470 214 480M12 460L110 480M24 430V524M94 450L88 524M110 450L112 524M260 396L230 420 190 410M230 420L280 426 296 420 300 370M280 426L214 490M296 396L370 410M370 460Q400 430 450 430L530 440M402 380L398 430M412 350L406 390 470 400 526 396 520 440M436 390L430 430M390 344L412 350 470 360M470 390L450 476M470 390Q530 320 546 284L590 282M450 270L512 276 550 284M450 270L444 300 500 346M526 216L470 350M396 192L450 200 546 214Q526 160 500 160L450 150M546 214Q570 210 580 120L600 56M546 214L572 240 606 270 604 306 640 300M516 250L566 236M572 268Q590 250 604 280M552 110L590 130 736 150M590 56L620 60 630 32 672 24 690 0M630 32L604 0M672 24L650 130M664 90L736 100M580 172L600 186 650 200 736 130M650 200L632 240 640 300 736 310M632 240L700 256 736 250M676 256L664 330M700 256L690 310 656 380M606 306L630 384M622 340L736 330M704 332V366L736 370M638 400Q650 450 700 484L696 524M700 490L736 500M316 450L302 454 310 480 290 524" />
            </g>
          </g>
          <text class="draft" x="23" y="361">DRAFT</text>
          <g fill="#fba565" transform="translate(-4 -7) scale(.3333)">
            <path d="M270 350V300Q272 282 288 281Q306 283 306 300Q306 306 302 312L276 350Z" />
            <path d="M279 363L315 309A29 29 0 0 1 364 341L328 401A30 30 0 0 1 279 363Z" />
            <path d="M358 366L396 308A29 29 0 0 1 446 308L484 370A29 29 0 0 1 437 404L421 380L406 404A29 29 0 0 1 358 366Z" />
          </g>
          <text class="brand" x="51" y="157">movestreets</text>
          <text class="stray" x="-2" y="26">S</text>
        </svg>
        <p class="caption">Not sure if this is something you have on your list but the S sticks
          <span class="meta">1:52 pm</span></p>
      </div>
      <button class="forward" type="button" aria-label="Forward">
        <svg viewBox="0 0 16 13"><path d="M9.500 0.500L15.800 6 9.500 11.500V8.200C5.500 8.200 2.500 9.200 .3 12.300 1.200 7.500 4 4.300 9.500 3.700Z" fill="#8a8d8f" /></svg>
      </button>
    </div>

    <div class="row out first">
      <p class="bubble">Yup indeed was the first thing on my list haha
        <span class="meta">1:55 pm <svg class="tick"><use href="#read" /></svg></span></p>
    </div>

    <div class="row in first">
      <p class="bubble">Just a couple of amends if that’s ok. I’ll get them all down together and send over
        <span class="meta">3:03 pm</span></p>
    </div>
    <div class="row in">
      <p class="bubble">Hoping it won’t take too long
        <span class="meta">3:03 pm</span></p>
    </div>

    <div class="row out first">
      <p class="bubble">Of course
        <span class="meta">3:03 pm <svg class="tick"><use href="#read" /></svg></span></p>
    </div>
  </main>

  <script>
    // little bubbles between the doodles: "x,y,radius"
    document.querySelectorAll('[data-dots]').forEach((group) => {
      group.dataset.dots.split(' ').forEach((dot) => {
        const [x, y, r] = dot.split(',');
        const c = document.createElementNS('http://www.w3.org/2000/svg', 'circle');
        c.setAttribute('cx', x);
        c.setAttribute('cy', y);
        c.setAttribute('r', r);
        group.appendChild(c);
      });
    });
  </script>
</body>
</html>
```

FILE: styles.css
```css
:root {
  --bg: #0b131a;
  --doodle: #182026;
  --in: #202c33;
  --out: #005c4b;
  --text: #e9edef;
}
*, *::before, *::after { box-sizing: border-box; }
body {
  margin: 0;
  position: relative;
  min-height: 100vh;
  overflow-x: hidden;
  background: var(--bg);
  color: var(--text);
  font-family: Inter, "Liberation Sans", sans-serif;
  font-size: 14px;
  line-height: 19px;
}
p { margin: 0; }
a { color: #53bdeb; text-decoration: none; }

.wallpaper {
  position: absolute; top: 0; left: 0;
  width: 100%; height: 100%;
  fill: none; stroke: var(--doodle); stroke-width: 3;
  stroke-linejoin: round; stroke-linecap: round;
}
.wallpaper text { font-weight: 800; stroke-width: 3; }
.sprites { position: absolute; width: 0; height: 0; }

.chat {
  position: relative;
  display: flex; flex-direction: column;
  gap: 2px;
  padding: 3px 12px 6px 39px;
}
.date {
  align-self: center;
  padding: 6px 12px 7px;
  border-radius: 8px;
  background: #182229; color: #8696a0;
  font-size: 12px;
}

.row { display: flex; align-items: center; }
.row.out { justify-content: flex-end; }
.row.first { margin-top: 10px; }
.bubble {
  position: relative;
  display: flow-root;
  max-width: 75%;
  padding: 6px 7px 8px 9px;
  border-radius: 8px;
}
.in .bubble { background: var(--in); }
.out .bubble { background: var(--out); }
.first.in .bubble { border-top-left-radius: 0; }
.first.out .bubble { border-top-right-radius: 0; }
.first .bubble::before {
  content: "";
  position: absolute; top: 0;
  width: 8px; height: 11px;
  background: inherit;
}
.first.in .bubble::before {
  right: 100%;
  clip-path: path("M8 0H2Q0 1 1 2L8 11Z");
}
.first.out .bubble::before {
  left: 100%;
  clip-path: path("M0 0H6Q8 1 7 2L0 11Z");
}

.meta {
  float: right;
  display: flex; align-items: center; gap: 4px;
  height: 15px;
  margin: 9px 0 -5px 13px;
  font-size: 11px; line-height: 15px;
  color: #a2a8ab;
}
.out .meta { color: #99beb7; }
.tick { width: 16px; height: 11px; }

.media {
  width: 246px;
  padding: 3px 3px 8px;
}
.picture {
  display: block;
  width: 100%;
  border-radius: 6px;
}
.caption { padding: 7px 4px 0 6px; display: flow-root; }
.brand { font: 23px "DejaVu Sans", sans-serif; fill: #f6a465; }
.stray { font: 17px Inter, sans-serif; fill: #f0a064; }
.draft { font: bold 45px "Liberation Sans", sans-serif; fill: #efefef; }

.forward {
  display: flex; align-items: center; justify-content: center;
  width: 26px; height: 26px;
  margin-left: 7px; padding: 0;
  border: none; border-radius: 50%;
  background: #05090c;
  cursor: pointer;
}
.forward svg { width: 16px; height: 13px; }
```
